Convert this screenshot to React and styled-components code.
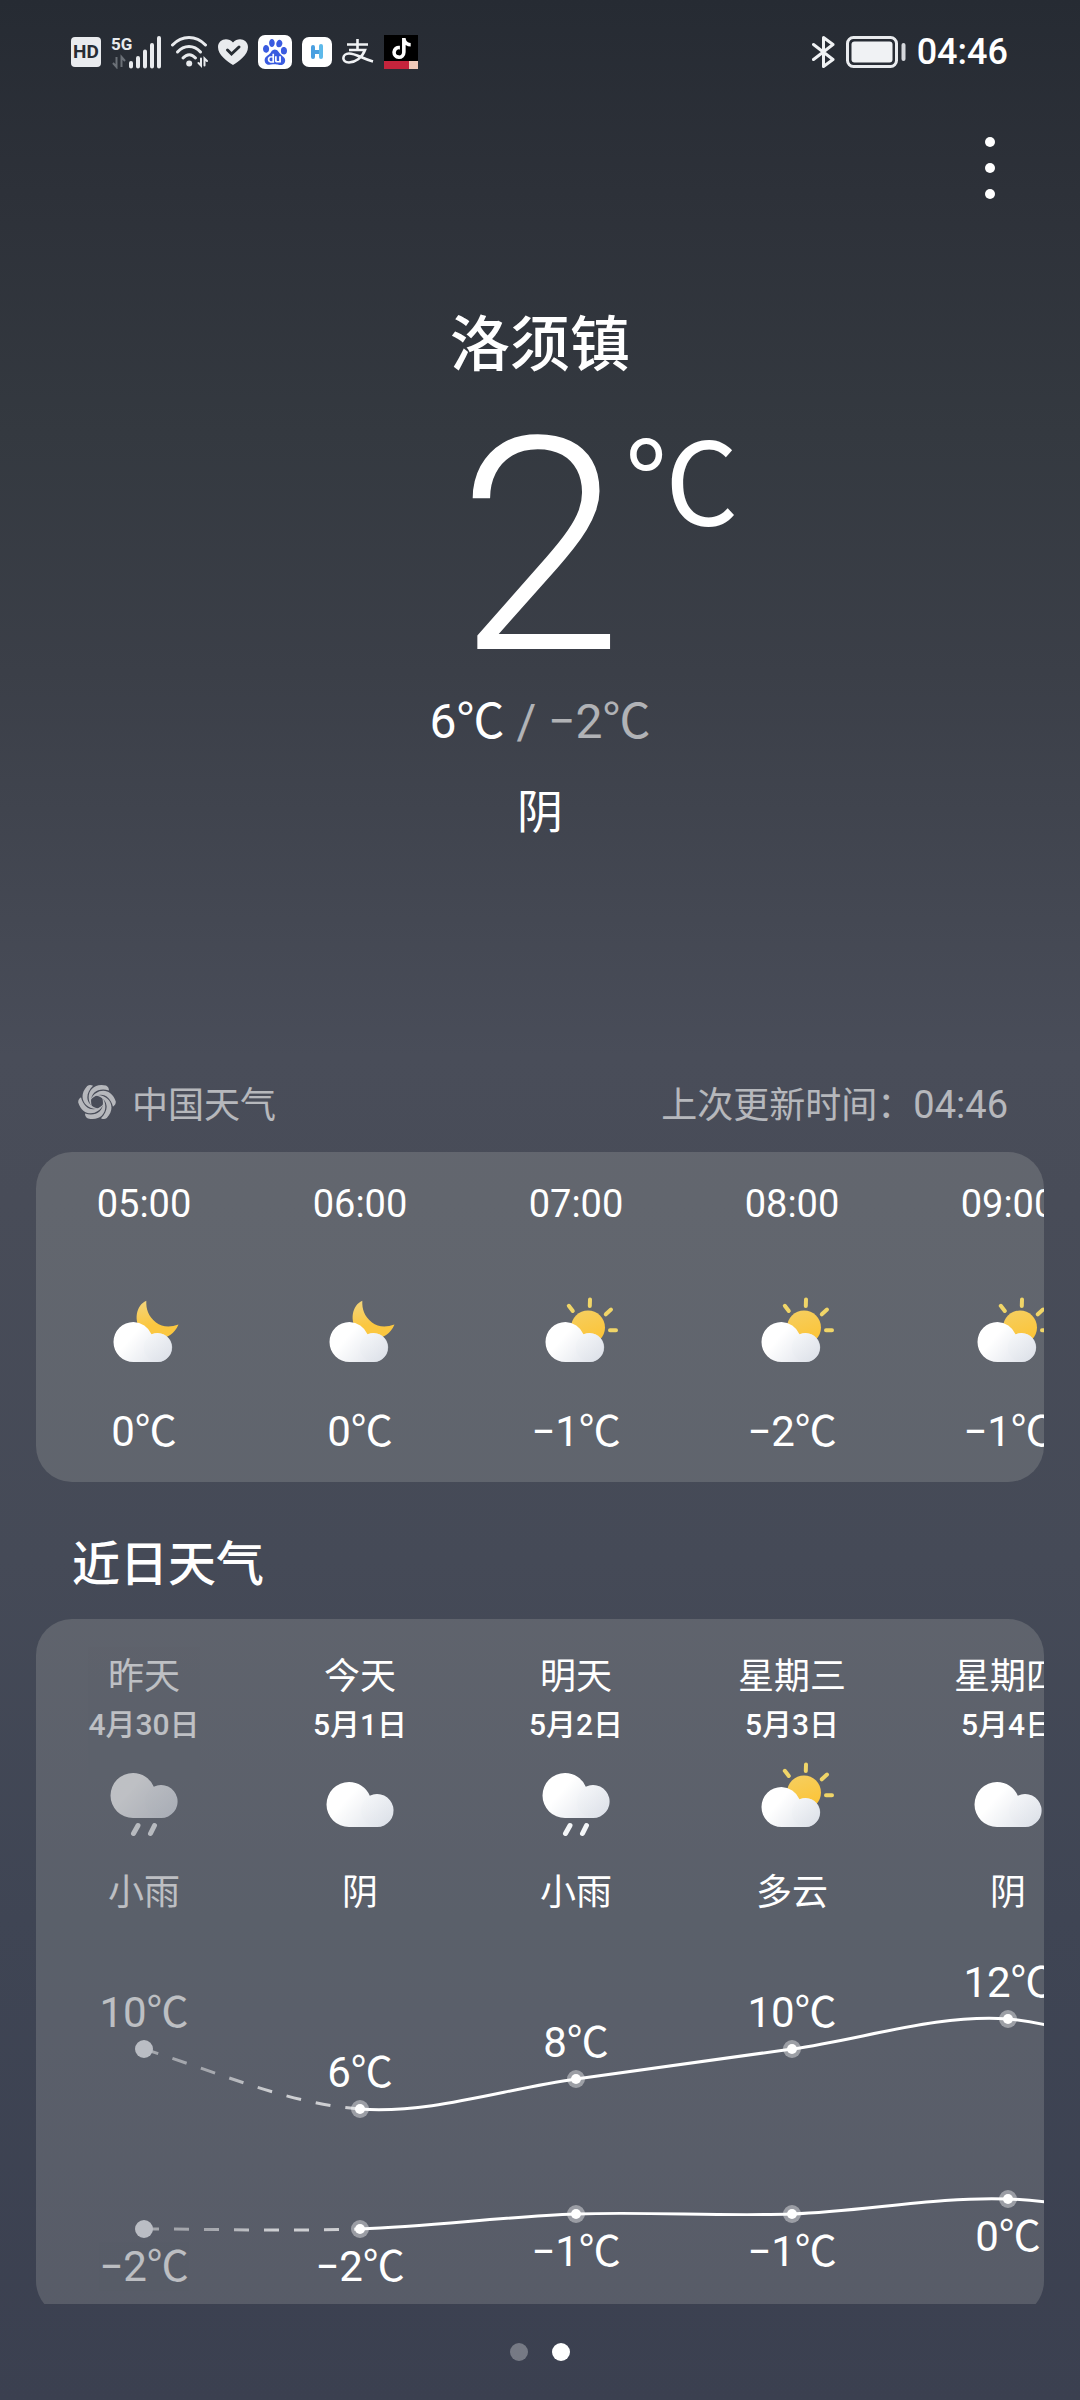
import styled, { createGlobalStyle } from 'styled-components';
import { SiBaidu } from 'react-icons/si';
import { FaTiktok } from 'react-icons/fa6';

const COLUMN = 216;
const CHART_HEIGHT = 400;
const NUMBER_FONT = "Roboto, 'Noto Sans CJK SC', sans-serif";

const GlobalStyle = createGlobalStyle`
  * {
    box-sizing: border-box;
  }

  body {
    margin: 0;
    color: #fff;
    font-family: 'Noto Sans CJK SC', sans-serif;
    background: #3b4050;
  }

  h1, h2, p, ul {
    margin: 0;
    padding: 0;
    font-weight: 400;
  }
`;

const Page = styled.div`
  display: flex;
  flex-direction: column;
  height: 100vh;
  background: linear-gradient(
    #262b33 0%,
    #2d3139 8%,
    #343940 18%,
    #3b3f48 28%,
    #494d59 44%,
    #484c58 50%,
    #454a57 65%,
    #3f4554 80%,
    #3b4050 100%
  );
`;

const Content = styled.main`
  flex: 1;
  min-height: 0;
  overflow-y: auto;
  scrollbar-width: none;
`;

const StatusBar = styled.header`
  display: flex;
  align-items: center;
  justify-content: space-between;
  height: 104px;
  padding: 0 72px 0 71px;
`;

const StatusGroup = styled.div`
  display: flex;
  align-items: center;
  gap: ${props => props.$gap}px;

  svg {
    display: block;
  }
`;

const HdBadge = styled.span`
  width: 30px;
  height: 30px;
  border-radius: 4px;
  background: #e9ebee;
  color: #272c33;
  font: 700 19px/30px Roboto, sans-serif;
  text-align: center;
`;

const AppBadge = styled.span`
  display: flex;
  align-items: center;
  justify-content: center;
  width: ${props => props.$size}px;
  height: ${props => props.$size}px;
  border-radius: 7px;
  background: #fff;
  color: #3a5be0;
`;

const VideoBadge = styled.span`
  display: flex;
  flex-direction: column;
  align-items: center;
  justify-content: space-between;
  width: 34px;
  height: 34px;
  padding-top: 3px;
  background: #000;
`;

const VideoStrip = styled.span`
  width: 100%;
  height: 8px;
  background: linear-gradient(90deg, #c4243c 0 74%, #f0c9b8 74%);
`;

const Clock = styled.time`
  font-family: ${NUMBER_FONT};
  font-size: 36px;
  font-weight: 500;
  line-height: 48px;
`;

const Toolbar = styled.div`
  display: flex;
  align-items: center;
  justify-content: flex-end;
  height: 128px;
  padding: 0 60px;
`;

const MenuButton = styled.button`
  display: flex;
  flex-direction: column;
  align-items: center;
  gap: 16px;
  width: 60px;
  padding: 0;
  border: 0;
  background: none;
`;

const MenuDot = styled.span`
  width: 10px;
  height: 10px;
  border-radius: 50%;
  background: #fff;
`;

const Current = styled.section`
  display: flex;
  flex-direction: column;
  align-items: center;
  padding: 68px 0 212px;
`;

const City = styled.h1`
  font-size: 60px;
  font-weight: 500;
  line-height: 80px;
`;

const Temperature = styled.div`
  display: grid;
  grid-template-columns: 1fr auto 1fr;
  width: 100%;
  height: 284px;
  padding-top: 36px;
`;

const Degrees = styled.span`
  grid-column: 2;
  font-family: ${NUMBER_FONT};
  font-size: 298px;
  font-weight: 300;
  line-height: 264px;
`;

const Unit = styled.span`
  padding-left: 2px;
  font-size: 114px;
  line-height: 120px;
`;

const Range = styled.p`
  margin-top: 26px;
  font-family: ${NUMBER_FONT};
  font-size: 48px;
  line-height: 64px;
`;

const Muted = styled.span`
  opacity: 0.6;
`;

const Condition = styled.p`
  margin-top: 22px;
  font-size: 46px;
  line-height: 64px;
`;

const SourceRow = styled.div`
  display: flex;
  align-items: center;
  justify-content: space-between;
  height: 100px;
  padding: 0 72px 0 78px;
  font-size: 36px;
  opacity: 0.6;
`;

const Source = styled.a`
  display: flex;
  align-items: center;
  gap: 16px;
  color: inherit;
  text-decoration: none;
`;

const UpdateTime = styled.time`
  font-family: ${NUMBER_FONT};
  font-size: 38px;
`;

const Card = styled.section`
  margin: 0 36px;
  border-radius: 36px;
  background: rgba(255, 255, 244, 0.145);
  overflow-x: auto;
  overflow-y: hidden;
  scrollbar-width: none;
`;

const Columns = styled.ul`
  display: flex;
  width: max-content;
  list-style: none;
`;

const HourItem = styled.li`
  display: flex;
  flex-direction: column;
  align-items: center;
  width: ${COLUMN}px;
  padding: 24px 0 22px;
  font-family: ${NUMBER_FONT};
  line-height: 56px;

  svg {
    display: block;
    margin: 52px 0 24px;
  }
`;

const HourTime = styled.time`
  font-size: 38px;
`;

const HourTemp = styled.span`
  font-size: 42px;
`;

const Heading = styled.h2`
  padding: 48px 72px 29px;
  font-size: 48px;
  font-weight: 500;
  line-height: 60px;
`;

const DayItem = styled.li`
  display: flex;
  flex-direction: column;
  align-items: center;
  width: ${COLUMN}px;
  padding-top: 26px;
  font-size: 36px;
  line-height: 56px;
  opacity: ${props => (props.$past ? 0.6 : 1)};

  svg {
    display: block;
    margin: 2px 0 16px;
  }
`;

const DayDate = styled.time`
  margin-top: 2px;
  font-family: ${NUMBER_FONT};
  font-size: 30px;
  font-weight: 500;
  line-height: 44px;
`;

const Chart = styled.svg`
  display: block;
  fill: #fff;
  font-family: ${NUMBER_FONT};
  font-size: 42px;
  text-anchor: middle;
`;

const Pager = styled.nav`
  display: flex;
  align-items: center;
  justify-content: center;
  gap: 24px;
  height: 96px;
`;

const PageDot = styled.button`
  width: 18px;
  height: 18px;
  padding: 0;
  border: 0;
  border-radius: 50%;
  background: ${props => (props.$active ? '#fff' : 'rgba(255, 255, 255, 0.3)')};
`;

const hours = [
  { time: '05:00', icon: 'night', temp: 0 },
  { time: '06:00', icon: 'night', temp: 0 },
  { time: '07:00', icon: 'sunny', temp: -1 },
  { time: '08:00', icon: 'sunny', temp: -2 },
  { time: '09:00', icon: 'sunny', temp: -1 }
];

const days = [
  { name: '昨天', date: '4月30日', icon: 'rain', text: '小雨', high: 10, low: -2, past: true },
  { name: '今天', date: '5月1日', icon: 'cloud', text: '阴', high: 6, low: -2 },
  { name: '明天', date: '5月2日', icon: 'rain', text: '小雨', high: 8, low: -1 },
  { name: '星期三', date: '5月3日', icon: 'sunny', text: '多云', high: 10, low: -1 },
  { name: '星期四', date: '5月4日', icon: 'cloud', text: '阴', high: 12, low: 0 }
];

// neighbours outside the visible columns, they only bend the curves
const dayBefore = { high: 15, low: -2 };
const dayAfter = { high: 8, low: -2 };

const formatTemp = t => `${t < 0 ? '−' : ''}${Math.abs(t)}℃`;

const pointX = i => COLUMN / 2 + i * COLUMN;
const pointY = t => 282 - t * 15;

// Catmull-Rom segment between column i and i + 1
function segment(key, i) {
  const y = n => pointY((n < 0 ? dayBefore : days[n] || dayAfter)[key]);
  const c1 = y(i) + (y(i + 1) - y(i - 1)) / 6;
  const c2 = y(i + 1) - (y(i + 2) - y(i)) / 6;
  return `C${pointX(i) + COLUMN / 3} ${c1} ${pointX(i + 1) - COLUMN / 3} ${c2} ${pointX(i + 1)} ${y(i + 1)}`;
}

function WeatherIcon({ type }) {
  const big = type === 'cloud' || type === 'rain';
  return (
    <svg width="96" height="96" viewBox="0 0 96 96" aria-hidden="true">
      <defs>
        <linearGradient id="cloudBack" x1="0" y1="0.2" x2="1" y2="0.8">
          <stop offset="0.3" stopColor="#ffffff" />
          <stop offset="1" stopColor="#dde1e9" />
        </linearGradient>
        <linearGradient id="cloudFront" x1="0" y1="0" x2="0.6" y2="1">
          <stop offset="0" stopColor="#f6f8fa" />
          <stop offset="1" stopColor="#dfe3ea" />
        </linearGradient>
        <linearGradient id="sunFill" x1="0" y1="0" x2="0.3" y2="1">
          <stop offset="0" stopColor="#f5cf62" />
          <stop offset="1" stopColor="#fcc437" />
        </linearGradient>
        <linearGradient id="moonFill" x1="0" y1="0" x2="0.2" y2="1">
          <stop offset="0" stopColor="#f3d57e" />
          <stop offset="0.7" stopColor="#fbc740" />
        </linearGradient>
      </defs>
      {type === 'sunny' && (
        <g>
          <circle cx="60" cy="43.5" r="17" fill="url(#sunFill)" />
          <path
            d="M62 15.5L61.8 22M40.8 21.8L44.8 27M83 25.5L77.800 30.300M82 46.200H88"
            stroke="#f0d568"
            strokeWidth="4"
            strokeLinecap="round"
          />
        </g>
      )}
      {type === 'night' && (
        <path
          d="M50.3 16.8C40 21 37 38 46 47C56 58 76 57 82.5 40.5C74 43.5 66 43 60 38.5C52 32 50 25 50.3 16.8Z"
          fill="url(#moonFill)"
        />
      )}
      {big ? (
        <g transform={type === 'rain' ? 'translate(0 -9)' : undefined}>
          <path
            d="M37 33A22.5 22.5 0 0 1 57.8 46.7A16.5 16.5 0 1 1 65 78H37A22.5 22.5 0 0 1 37 33Z"
            fill="url(#cloudBack)"
          />
          <circle cx="65" cy="61.5" r="16" fill="url(#cloudFront)" opacity="0.4" />
        </g>
      ) : (
        <g>
          <path
            d="M37.5 38A20 20 0 0 1 55.5 50.3A14.5 14.5 0 1 1 62 78H37.5A20 20 0 0 1 37.5 38Z"
            fill="url(#cloudBack)"
          />
          <circle cx="62" cy="63.5" r="14.2" fill="url(#cloudFront)" opacity="0.5" />
        </g>
      )}
      {type === 'rain' && (
        <path d="M42 76.5L37.5 84.5M58.5 76.5L54.5 84.5" stroke="#f4f6f8" strokeWidth="5" strokeLinecap="round" />
      )}
    </svg>
  );
}

function TemperatureChart() {
  const width = COLUMN * days.length;

  return (
    <Chart width={width} height={CHART_HEIGHT} viewBox={`0 0 ${width} ${CHART_HEIGHT}`}>
      <defs>
        <linearGradient id="pastLine" gradientUnits="userSpaceOnUse" x1="108" y1="0" x2="324" y2="0">
          <stop offset="0.3" stopColor="#fff" stopOpacity="0.45" />
          <stop offset="0.6" stopColor="#fff" stopOpacity="0.7" />
        </linearGradient>
      </defs>
      {['high', 'low'].map(key => (
        <g key={key}>
          <path
            d={`M${pointX(0)} ${pointY(days[0][key])} ${segment(key, 0)}`}
            fill="none"
            stroke="url(#pastLine)"
            strokeWidth="3"
            strokeDasharray="15 15"
          />
          <path
            d={`M${pointX(1)} ${pointY(days[1][key])} ${[1, 2, 3, 4].map(i => segment(key, i)).join(' ')}`}
            fill="none"
            stroke="#fff"
            strokeWidth="3"
          />
          {days.map((day, i) => (
            <g key={day.date}>
              {day.past ? (
                <circle cx={pointX(i)} cy={pointY(day[key])} r="9" fill="#babdc4" />
              ) : (
                <>
                  <circle cx={pointX(i)} cy={pointY(day[key])} r="9" opacity="0.4" />
                  <circle cx={pointX(i)} cy={pointY(day[key])} r="5" />
                </>
              )}
              <text
                x={pointX(i)}
                y={pointY(day[key]) + (key === 'high' ? -22 : 52)}
                opacity={day.past ? 0.6 : 1}
              >
                {formatTemp(day[key])}
              </text>
            </g>
          ))}
        </g>
      ))}
    </Chart>
  );
}

function SignalIcon() {
  return (
    <svg width="50" height="34" viewBox="0 0 50 34">
      <text x="0" y="15" fill="#e9ebee" fontFamily="Roboto, sans-serif" fontSize="17" fontWeight="700">5G</text>
      <path d="M5.5 22V32L2 28M10.5 32V22L14 26" fill="none" stroke="#6b7077" strokeWidth="2" />
      <path
        d="M20 28V31.5M27 23V31.5M34 16.5V31.5M41 10V31.5M48 3V31.5"
        stroke="#e9ebee"
        strokeWidth="4"
        strokeLinecap="round"
      />
    </svg>
  );
}

function WifiIcon() {
  return (
    <svg width="37" height="34" viewBox="0 0 37 34" fill="none" stroke="#e9ebee" strokeLinecap="round">
      <path d="M1.5 10C11 0 25 0 34.5 10" strokeWidth="3" />
      <path d="M6.5 17C13 9.5 23 9.5 29.5 17" strokeWidth="3" />
      <path d="M12 23C16 18.5 20.5 18.5 24.5 23" strokeWidth="3" />
      <circle cx="18.2" cy="28.5" r="3" fill="#e9ebee" stroke="none" />
      <path d="M30 23.5V30.5L27.5 28M33.5 30.5V23.5L36 26" strokeWidth="2" />
    </svg>
  );
}

function HeartIcon() {
  return (
    <svg width="30" height="28" viewBox="0 0 30 28">
      <path d="M15 27C9 23 0 17 0 9C0 1 10-1.5 15 4.5C20-1.5 30 1 30 9C30 17 21 23 15 27Z" fill="#e9ebee" />
      <path d="M9.5 12L13.500 16L21 9" fill="none" stroke="#272c33" strokeWidth="3" strokeLinecap="round" />
    </svg>
  );
}

function PayIcon() {
  return (
    <svg width="32" height="26" viewBox="0 0 32 26" fill="none" stroke="#f0f2f4" strokeWidth="2.6">
      <path d="M5 5.5H26M15.5 0V11M7 11H23C20 19 13 23.5 7 23.5C-1 23.5 0 14.5 7 14.5C14 14.5 20 19.5 31 22.5" />
    </svg>
  );
}

function BluetoothIcon() {
  return (
    <svg width="23" height="34" viewBox="0 0 23 34" fill="none" stroke="#f0f2f4" strokeWidth="3" strokeLinejoin="round" strokeLinecap="round">
      <path d="M1.5 9.5L21 24.5L11.5 31.5V2.5L21 9.5L1.5 24.5" />
    </svg>
  );
}

function BatteryIcon() {
  return (
    <svg width="60" height="32" viewBox="0 0 60 32">
      <rect x="1.5" y="1.5" width="49" height="29" rx="6" fill="none" stroke="#e9ebee" strokeWidth="3" />
      <rect x="5.5" y="5.5" width="41" height="21" rx="3" fill="#f0f2f4" />
      <rect x="55.5" y="7" width="4" height="18" rx="2" fill="#d5d8dc" />
    </svg>
  );
}

function SwirlLogo() {
  return (
    <svg width="38" height="38" viewBox="-19 -19 38 38" fill="#fff" aria-hidden="true">
      {[0, 60, 120, 180, 240, 300].map(angle => (
        <path
          key={angle}
          d="M-5 5C-13-6-6-20 9-16.5Q12-15 12-11.5C0-15-9-8-5 5Z"
          transform={`rotate(${angle})`}
        />
      ))}
    </svg>
  );
}

export default function App() {
  return (
    <Page>
      <GlobalStyle />
      <Content>
        <StatusBar>
          <StatusGroup $gap={10}>
            <HdBadge>HD</HdBadge>
            <SignalIcon />
            <WifiIcon />
            <HeartIcon />
            <AppBadge $size={34}>
              <SiBaidu size={26} />
            </AppBadge>
            <AppBadge $size={30}>
              <svg width="14" height="16" viewBox="0 0 14 16" fill="none" strokeWidth="4" strokeLinecap="round">
                <path d="M3 3V13M3 8H11" stroke="#4a9fe0" />
                <path d="M11 2V13" stroke="#5db9ea" />
              </svg>
            </AppBadge>
            <PayIcon />
            <VideoBadge>
              <FaTiktok size={21} />
              <VideoStrip />
            </VideoBadge>
          </StatusGroup>
          <StatusGroup $gap={11}>
            <BluetoothIcon />
            <BatteryIcon />
            <Clock>04:46</Clock>
          </StatusGroup>
        </StatusBar>

        <Toolbar>
          <MenuButton aria-label="更多">
            <MenuDot />
            <MenuDot />
            <MenuDot />
          </MenuButton>
        </Toolbar>

        <Current>
          <City>洛须镇</City>
          <Temperature>
            <Degrees>2</Degrees>
            <Unit>℃</Unit>
          </Temperature>
          <Range>
            6℃ <Muted>/ −2℃</Muted>
          </Range>
          <Condition>阴</Condition>
        </Current>

        <SourceRow>
          <Source href="#source">
            <SwirlLogo />
            中国天气
          </Source>
          <span>上次更新时间：<UpdateTime>04:46</UpdateTime></span>
        </SourceRow>

        <Card>
          <Columns>
            {hours.map(hour => (
              <HourItem key={hour.time}>
                <HourTime>{hour.time}</HourTime>
                <WeatherIcon type={hour.icon} />
                <HourTemp>{formatTemp(hour.temp)}</HourTemp>
              </HourItem>
            ))}
          </Columns>
        </Card>

        <Heading>近日天气</Heading>
        <Card>
          <Columns>
            {days.map(day => (
              <DayItem key={day.date} $past={day.past}>
                <span>{day.name}</span>
                <DayDate>{day.date}</DayDate>
                <WeatherIcon type={day.icon} />
                <span>{day.text}</span>
              </DayItem>
            ))}
          </Columns>
          <TemperatureChart />
        </Card>
      </Content>

      <Pager>
        <PageDot aria-label="第1页" />
        <PageDot aria-label="第2页" $active />
      </Pager>
    </Page>
  );
}
